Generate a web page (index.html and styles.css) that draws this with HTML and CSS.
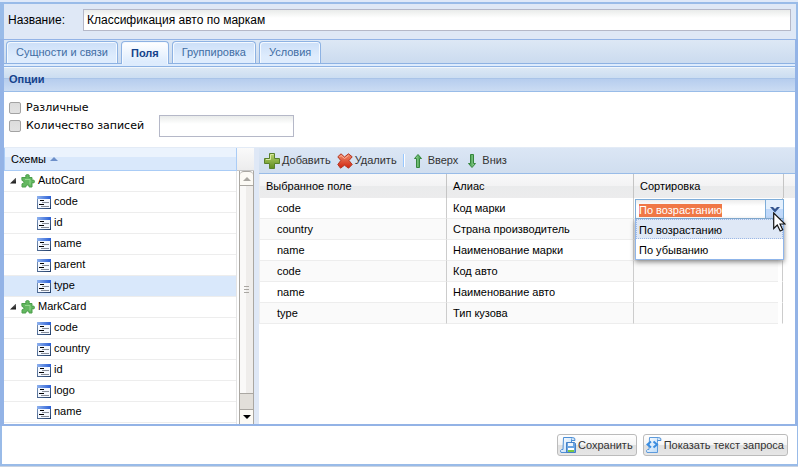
FILE: index.html
```html
<!DOCTYPE html>
<html lang="ru">
<head>
<meta charset="utf-8">
<meta name="viewport" content="width=device-width, initial-scale=1">
<title>Классификация авто по маркам</title>
<link rel="stylesheet" href="styles.css">
</head>
<body>
<svg class="defs" aria-hidden="true">
  <defs>
    <linearGradient id="gBlue" x1="0" y1="0" x2="1" y2="0"><stop offset="0" stop-color="#8fb2ee"/><stop offset="1" stop-color="#2a5fd6"/></linearGradient>
    <linearGradient id="gFrame" x1="0" y1="0" x2="1" y2="1"><stop offset="0" stop-color="#7f99bd"/><stop offset="1" stop-color="#1f3c68"/></linearGradient>
    <linearGradient id="gPlus" x1="0" y1="0" x2="0" y2="1"><stop offset="0" stop-color="#b9d46f"/><stop offset="1" stop-color="#5d8c1f"/></linearGradient>
    <linearGradient id="gRed" x1="0" y1="0" x2="0" y2="1"><stop offset="0" stop-color="#f08a68"/><stop offset="1" stop-color="#cf2410"/></linearGradient>
    <linearGradient id="gArrow" x1="0" y1="0" x2="1" y2="0"><stop offset="0" stop-color="#a5dba5"/><stop offset="1" stop-color="#2e9438"/></linearGradient>
    <linearGradient id="gPaper" x1="0" y1="0" x2="1" y2="1"><stop offset="0" stop-color="#ffffff"/><stop offset="1" stop-color="#b9d9f8"/></linearGradient>
    <symbol id="i-field" viewBox="0 0 14 13">
      <rect x="0" y="0" width="14" height="13" fill="url(#gFrame)"/>
      <rect x="1" y="3" width="12" height="9" fill="#f4f8ff"/>
      <rect x="0" y="0" width="14" height="3" fill="url(#gBlue)"/>
      <path d="M3 4.500h4M2 8.500h5" stroke="#000"/>
      <path d="M5 6.500h7M4 10.500h8" stroke="#858b96"/>
    </symbol>
    <symbol id="i-puzzle" viewBox="0 0 14 14">
      <path d="M.8 3.500H5Q3.800.5 6.500.5T8 3.500h3v2.800q2.500-1 2.500 1.200T11 8.700V13H8.200q.2-2-1.700-2T4.800 13H1V9.800q2 0 2-1.600T1 6.500z" fill="#63b860" stroke="#4c9e4b"/>
      <path d="M4 5.500h5v5" stroke="#95d68e" fill="none"/>
    </symbol>
    <symbol id="i-plus" viewBox="0 0 16 16">
      <path d="M5.500.5h5v5h5v5h-5v5h-5v-5h-5v-5h5z" fill="url(#gPlus)" stroke="#58802c"/>
      <path d="M6.500 2v4.500H2M9.500 1.500h-3" stroke="#d8e8a5" fill="none"/>
    </symbol>
    <symbol id="i-cross" viewBox="0 0 16 16">
      <path d="M4 .8L7.500 4 11.500.8l3.700 3-3.200 3.700 3.200 4-3.700 3.700-4-3-4 3L.8 11.500l3-4-3-3.700z" fill="url(#gRed)" stroke="#b33622" stroke-linejoin="round"/>
      <path d="M2.500 4L4 2.500l3.500 3 4-3" stroke="#ffb49a" fill="none"/>
    </symbol>
    <symbol id="i-up" viewBox="0 0 10 14">
      <path d="M5 .5L8.500 4.500h-2v9h-3v-9h-2z" fill="url(#gArrow)" stroke="#35863d" stroke-linejoin="round"/>
    </symbol>
    <symbol id="i-save" viewBox="0 0 16 16">
      <path d="M3.500.5h9q-1.500 2-1 5v10H1q-1.500-2 .5-3H3z" fill="url(#gPaper)" stroke="#4d8fd6"/>
      <path d="M12.500.5q3 0 2.500 3h-3" fill="#d6e9fb" stroke="#4d8fd6"/>
      <path d="M6.500 5.500h8l1 1v9h-9z" fill="#6ba4e2" stroke="#4580c6"/>
      <path d="M8 6h5v3H8z" fill="#eef5fd"/>
      <path d="M8 11h6v4H8z" fill="#fff"/><path d="M8 13h6v2H8z" fill="#7ac943"/>
    </symbol>
    <symbol id="i-query" viewBox="0 0 16 16">
      <path d="M3.500.5h9q-1.500 2-1 5v10H1q-1.500-2 .5-3H3z" fill="url(#gPaper)" stroke="#5d9bdc"/>
      <path d="M12.500.5q3 0 2.500 3h-3" fill="#d6e9fb" stroke="#4d8fd6"/>
      <path d="M5 4.500L1.500 7.500 5 10.500M7.500 4.500L11 7.500l-3.500 3" fill="none" stroke="#3b8de0" stroke-width="2"/>
    </symbol>
  </defs>
</svg>
<div class="window">
  <div class="name-row">
    <label for="name">Название:</label>
    <input class="text-field" id="name" type="text" value="Классификация авто по маркам">
  </div>
  <main class="tab-panel">
    <nav class="tabs" role="tablist">
      <button class="tab" role="tab" type="button">Сущности и связи</button>
      <button class="tab active" role="tab" type="button" aria-selected="true">Поля</button>
      <button class="tab" role="tab" type="button">Группировка</button>
      <button class="tab" role="tab" type="button">Условия</button>
    </nav>
    <h2 class="panel-title">Опции</h2>
    <div class="options">
      <div class="option"><input id="distinct" type="checkbox"><label for="distinct">Различные</label></div>
      <div class="option"><input id="limit" type="checkbox"><label for="limit">Количество записей</label>
        <input class="text-field count" type="text" aria-label="Количество записей"></div>
    </div>
    <div class="split">
      <section class="schemas">
        <div class="schemas-head">
          <div class="schemas-title">Схемы <span class="sort-asc"></span></div>
        </div>
        <div class="schemas-body">
          <ul class="tree">
            <li class="node"><span class="twisty"></span><svg class="puzzle"><use href="#i-puzzle"/></svg>AutoCard</li>
            <li class="leaf"><svg><use href="#i-field"/></svg>code</li>
            <li class="leaf"><svg><use href="#i-field"/></svg>id</li>
            <li class="leaf"><svg><use href="#i-field"/></svg>name</li>
            <li class="leaf"><svg><use href="#i-field"/></svg>parent</li>
            <li class="leaf selected"><svg><use href="#i-field"/></svg>type</li>
            <li class="node"><span class="twisty"></span><svg class="puzzle"><use href="#i-puzzle"/></svg>MarkCard</li>
            <li class="leaf"><svg><use href="#i-field"/></svg>code</li>
            <li class="leaf"><svg><use href="#i-field"/></svg>country</li>
            <li class="leaf"><svg><use href="#i-field"/></svg>id</li>
            <li class="leaf"><svg><use href="#i-field"/></svg>logo</li>
            <li class="leaf"><svg><use href="#i-field"/></svg>name</li>
          </ul>
          <div class="scrollbar">
            <button class="scroll-btn up" type="button" aria-label="Прокрутить вверх"></button>
            <div class="thumb"><span class="grip"></span></div>
            <div class="track"></div>
            <button class="scroll-btn down" type="button" aria-label="Прокрутить вниз"></button>
          </div>
        </div>
      </section>
      <section class="fields">
        <div class="toolbar">
          <button type="button"><svg><use href="#i-plus"/></svg>Добавить</button>
          <button type="button"><svg><use href="#i-cross"/></svg>Удалить</button>
          <span class="separator"></span>
          <button type="button" class="move"><svg><use href="#i-up"/></svg>Вверх</button>
          <button type="button" class="move flip"><svg><use href="#i-up"/></svg>Вниз</button>
        </div>
        <table class="grid">
          <colgroup><col class="c-field"><col class="c-alias"><col class="c-sort"><col class="c-gap"><col></colgroup>
          <thead><tr><th>Выбранное поле</th><th>Алиас</th><th colspan="2">Сортировка</th><th class="rest"></th></tr></thead>
          <tbody>
            <tr><td>code</td><td>Код марки</td><td class="editing">
              <div class="combo">
                <div class="combo-box">
                  <input id="sort" type="text" role="combobox" aria-label="Сортировка" aria-expanded="true" aria-controls="sort-list" value="По возрастанию">
                  <button type="button" aria-label="Открыть список"><svg viewBox="0 0 10 6"><path d="M0 0h3l2 2 2-2h3L5 5.500z" fill="#33558f"/></svg></button>
                </div>
                <ul class="combo-list" id="sort-list" role="listbox">
                  <li class="over" role="option" aria-selected="true">По возрастанию</li>
                  <li role="option">По убыванию</li>
                </ul>
                <svg class="pointer" viewBox="0 0 13 20"><path d="M.7 1v15.500L4.300 13l2.900 6 2.500-1.200L7 12h5z" fill="#fff" stroke="#111" stroke-width="1.200"/></svg>
              </div></td><td class="gap"></td></tr>
            <tr><td>country</td><td>Страна производитель</td><td></td><td class="gap"></td></tr>
            <tr><td>name</td><td>Наименование марки</td><td></td><td class="gap"></td></tr>
            <tr><td>code</td><td>Код авто</td><td></td><td class="gap"></td></tr>
            <tr><td>name</td><td>Наименование авто</td><td></td><td class="gap"></td></tr>
            <tr><td>type</td><td>Тип кузова</td><td></td><td class="gap"></td></tr>
          </tbody>
        </table>
      </section>
    </div>
  </main>
  <footer class="footer">
    <button type="button"><svg><use href="#i-save"/></svg>Сохранить</button>
    <button type="button"><svg><use href="#i-query"/></svg>Показать текст запроса</button>
  </footer>
</div>
<script src="app.js"></script>
</body>
</html>
```
FILE: app.js
```js
// Start editing the sort order with its whole value selected.
const sortInput = document.getElementById('sort');
sortInput.focus();
sortInput.select();
```
FILE: styles.css
```css
* { box-sizing: border-box; }

body {
  margin: 0;
  font: 11px/13px "Liberation Sans", Arial, sans-serif;
  color: #000;
  background: #dfe9f9;
}

button, input { font: inherit; margin: 0; }
button { cursor: default; }
ul { list-style: none; margin: 0; padding: 0; }
.defs { position: absolute; width: 0; height: 0; }

.window {
  display: flex;
  flex-direction: column;
  min-height: 100vh;
  padding-top: 2px;
  border-bottom: 1px solid #c9d3e2;
}

.name-row {
  display: flex;
  align-items: flex-start;
  gap: 18px;
  padding: 5px 5px 8px 4px;
  border: solid #99bbe8;
  border-width: 2px 2px 0 4px;
  background: #dfe8f6;
  font-size: 12px;
}
.name-row label { line-height: 22px; }
.name-row .text-field { flex: 1; }

.text-field {
  height: 22px;
  padding: 0 3px;
  border: 1px solid #b5b8c8;
  border-radius: 0;
  background: linear-gradient(#e9ebea, #fff 8px);
  outline: none;
}

.tab-panel {
  flex: 1;
  display: flex;
  flex-direction: column;
  border: solid #93b3e6;
  border-width: 1px 3px 2px 4px;
  background: #fff;
}

.tabs {
  display: flex;
  gap: 3px;
  height: 24px;
  padding: 1px 2px 0;
  border-bottom: 1px solid #8db2e3;
  background: linear-gradient(#dde8f5, #cbdbef);
}
.tab {
  padding: 0 9px;
  border: 1px solid #8db2e3;
  border-bottom: 0;
  border-radius: 4px 4px 0 0;
  background: linear-gradient(#ccdff8, #deecfd 70%);
  box-shadow: inset 1px 1px #f4f9ff, inset -1px 0 #f4f9ff;
  color: #416da3;
}
.tab.active {
  margin-bottom: -1px;
  background: linear-gradient(#fff, #deecfd 90%);
  color: #15428b;
  font-weight: bold;
}

.panel-title {
  height: 28px;
  margin: 0;
  padding: 0 5px;
  border-top: 2px solid #deecfd;
  border-bottom: 1px solid #99bce8;
  background: linear-gradient(#8db2e3 1px, #f2f7fc 1px 2px, #dce8f4 2px, #cbddf1 12px, #a9c4e8 12px 13px, #b6cdee 13px, #cbdcf3);
  color: #15428b;
  font-size: 11px;
  font-weight: bold;
  line-height: 26px;
}

.options {
  padding: 7px 5px 12px;
  font: 11px/18px "DejaVu Sans", Verdana, sans-serif;
}
.option { display: flex; align-items: center; gap: 5px; height: 18px; }
.option input[type="checkbox"] {
  appearance: none;
  width: 12px;
  height: 12px;
  border: 1px solid #a3a3a3;
  border-radius: 2px;
  background: linear-gradient(#dcdcdc, #e2e2e2);
}
.count { width: 135px; margin-left: 10px; }

.split {
  flex: 1;
  display: flex;
  gap: 5px;
  border-top: 1px solid #e3ebf6;
  background: #dfe8f6;
}

.schemas { display: flex; flex-direction: column; width: 250px; background: #fff; }
.schemas-head {
  display: flex;
  height: 23px;
  padding-right: 17px;
  border-bottom: 1px solid #c5c5c5;
  background: linear-gradient(#fafafa, #ececed);
}
.schemas-title {
  flex: 1;
  display: flex;
  align-items: center;
  gap: 4px;
  height: 23px;
  padding: 0 6px;
  border: solid #aaccf6;
  border-width: 0 1px 1px;
  background: linear-gradient(#ebf3fd 9px, #d9e8fb 9px);
}
.sort-asc {
  border: solid transparent;
  border-width: 0 4px 4px;
  border-bottom-color: #6d8fc9;
}
.schemas-body { flex: 1; display: flex; }
.tree { flex: 1; margin-right: 2px; border-right: 1px solid #e4e4e4; }
.tree li {
  display: flex;
  align-items: center;
  height: 21px;
  padding-bottom: 1px;
  border-bottom: 1px solid #ededed;
}
.tree .node { gap: 3px; padding-left: 6px; }
.tree .leaf { gap: 3px; padding-left: 33px; }
.tree .selected { background: #d9e8fb; }
.tree svg { width: 14px; height: 13px; margin-top: 1px; }
.tree .puzzle { width: 14px; height: 14px; }
.twisty {
  width: 6px;
  height: 6px;
  margin-right: 2px;
  background: linear-gradient(#666, #111);
  clip-path: polygon(100% 0, 100% 100%, 0 100%);
}

.scrollbar {
  display: flex;
  flex-direction: column;
  width: 15px;
  border: solid #aaa7a2;
  border-width: 0 1px;
}
.scroll-btn {
  display: flex;
  align-items: center;
  justify-content: center;
  height: 15px;
  padding: 0;
  border: 1px solid #aaa7a2;
  border-width: 1px 0;
  background: #fcfaf5;
}
.scroll-btn::before { content: ""; border: solid transparent; }
.up { border-radius: 4px 4px 0 0; }
.down { border-bottom: 0; }
.up::before { border-width: 0 4px 4px; border-bottom-color: #aaa7a2; }
.down::before { border-width: 4px 4px 0; border-top-color: #000; }
.thumb {
  flex: 1;
  display: flex;
  align-items: center;
  justify-content: center;
  background: linear-gradient(to right, #faf9f8 50%, #efedeb 50%);
}
.grip {
  width: 5px;
  height: 7px;
  background: repeating-linear-gradient(#aaa7a2 0 1px, transparent 1px 3px);
}
.track { height: 16px; border-top: 1px solid #aaa7a2; background: #e2dfda; }

.fields { flex: 1; background: #fff; }
.toolbar {
  display: flex;
  align-items: center;
  height: 26px;
  padding-left: 5px;
  border-bottom: 1px solid #99bce8;
  background: linear-gradient(#dbe6f5, #d0deef);
}
.toolbar button {
  display: flex;
  align-items: center;
  gap: 2px;
  margin-right: 6px;
  padding: 0;
  border: 0;
  background: none;
  color: #333;
}
.toolbar svg { width: 16px; height: 16px; }
.toolbar .move { gap: 5px; margin-right: 9px; }
.toolbar .move svg { width: 10px; height: 14px; }
.toolbar .flip svg { transform: rotate(180deg); }
.separator { width: 1px; height: 13px; margin-right: 9px; background: #98c8ff; box-shadow: 1px 0 #fff; }

.grid { width: 100%; table-layout: fixed; border-collapse: separate; border-spacing: 0; }
.c-field, .c-alias { width: 187px; }
.c-sort { width: 145px; }
.c-gap { width: 5px; }
.grid th {
  height: 24px;
  padding: 0 6px;
  border-left: 1px solid #c5c5c5;
  background: linear-gradient(#f9f9f9, #f3f3f4 12px, #eaebec 12px, #ececed);
  font-weight: normal;
  text-align: left;
}
.grid th:first-child { border-left-color: #eee; }
.grid td {
  height: 21px;
  padding: 0 6px;
  border-left: 1px solid #ccc;
  border-bottom: 1px solid #ededed;
}
.grid td:first-child { padding-left: 17px; border-left-color: #ededed; }
.grid tr:nth-child(even) td { background: #fafafa; }
.grid td.gap, .grid tr:nth-child(even) td.gap {
  padding: 0;
  border-left: 0;
  border-right: 1px solid #ccc;
  border-bottom-color: #fff;
  background: #fff;
}
.grid td.editing { padding: 0 0 0 1px; }

.combo { position: relative; height: 20px; }
.combo-box {
  position: absolute;
  z-index: 1;
  top: 1px;
  left: 0;
  display: flex;
  width: 149px;
  height: 20px;
  border: 1px solid #7eadd9;
  background: linear-gradient(#ececec, #fff 6px);
}
.combo-box input {
  flex: 1;
  min-width: 0;
  padding: 3px 3px 0;
  border: 0;
  background: none;
  outline: none;
  caret-color: transparent;
}
.combo-box input::selection { background: #f07746; color: #fff; }
.combo-box button {
  display: flex;
  justify-content: center;
  width: 18px;
  padding: 7px 0 0;
  border: 0;
  border-left: 1px solid #7eadd9;
  background: linear-gradient(#e4f0fd 50%, #c0d9fb 50%);
}
.combo-box svg { width: 10px; height: 6px; }
.combo-list {
  position: absolute;
  z-index: 1;
  top: 21px;
  left: 0;
  width: 149px;
  border: 1px solid #8fb5ea;
  border-top: 0;
  background: #fff;
  box-shadow: 0 2px 5px #888;
}
.combo-list li { height: 20px; padding: 0 2px; border: 1px solid transparent; line-height: 20px; }
.combo-list .over { border: 1px dotted #9cb8e6; background: #dfe8f6; }
.pointer { position: absolute; z-index: 2; top: 14px; left: 138px; width: 13px; height: 20px; }

.footer {
  display: flex;
  justify-content: flex-end;
  gap: 6px;
  padding: 8px 9px;
  border: solid #99bbe8;
  border-width: 0 1px 2px 2px;
  background: #fff;
}
.footer button {
  display: flex;
  align-items: center;
  gap: 2px;
  height: 22px;
  padding: 0 3px 0 2px;
  border: 1px solid #bbb;
  border-radius: 3px;
  background: linear-gradient(#fff, #f4f4f4 50%, #e0e0e0 50%, #e6e6e6);
  color: #333;
}
.footer svg { width: 16px; height: 16px; }
```
